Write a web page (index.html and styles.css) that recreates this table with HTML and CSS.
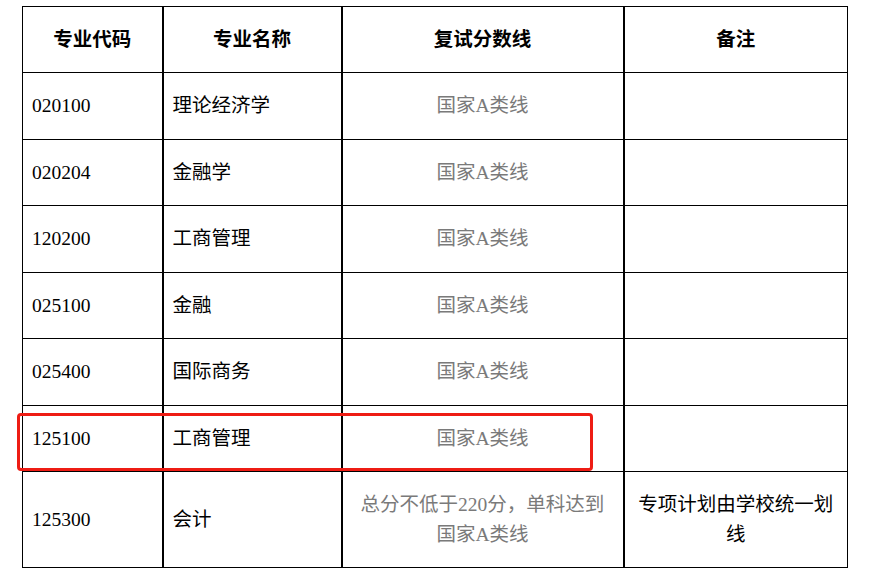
FILE: index.html
```html
<!DOCTYPE html>
<html lang="zh-CN">
<head>
<meta charset="utf-8">
<link rel="stylesheet" href="styles.css">
</head>
<body>
<div class="wrap">
<table class="score">
  <colgroup>
    <col class="c1"><col class="c2"><col class="c3"><col class="c4">
  </colgroup>
  <thead>
    <tr class="head">
      <th>专业代码</th><th>专业名称</th><th>复试分数线</th><th>备注</th>
    </tr>
  </thead>
  <tbody>
    <tr class="r67"><td class="code">020100</td><td class="name">理论经济学</td><td class="line">国家A类线</td><td></td></tr>
    <tr class="r66"><td class="code">020204</td><td class="name">金融学</td><td class="line">国家A类线</td><td></td></tr>
    <tr class="r67"><td class="code">120200</td><td class="name">工商管理</td><td class="line">国家A类线</td><td></td></tr>
    <tr class="r66"><td class="code">025100</td><td class="name">金融</td><td class="line">国家A类线</td><td></td></tr>
    <tr class="r67"><td class="code">025400</td><td class="name">国际商务</td><td class="line">国家A类线</td><td></td></tr>
    <tr class="r66"><td class="code">125100</td><td class="name">工商管理</td><td class="line">国家A类线</td><td></td></tr>
    <tr class="rlast"><td class="code">125300</td><td class="name">会计</td><td class="line">总分不低于220分，单科达到<br>国家A类线</td><td class="note">专项计划由学校统一划<br>线</td></tr>
  </tbody>
</table>
<div class="highlight"></div>
</div>
</body>
</html>
```

FILE: styles.css
```css
html, body {
  margin: 0;
  padding: 0;
  background: #ffffff;
}
.wrap {
  position: relative;
  width: 869px;
  height: 578px;
  padding: 6px 0 0 22px;
  box-sizing: border-box;
}
.score {
  border-collapse: collapse;
  table-layout: fixed;
  width: 825px;
  font-family: "Liberation Serif", "Noto Sans CJK SC", serif;
  font-size: 19.5px;
  color: #000;
}
.c1 { width: 140px; }
.c2 { width: 179px; }
.c3 { width: 282px; }
.c4 { width: 224px; }
.score th, .score td {
  border: 1px solid #000;
  padding: 0 9px;
  vertical-align: middle;
  line-height: 30px;
}
.score th + th, .score td + td {
  border-left: 2px solid #000;
}
.score th {
  font-weight: bold;
  text-align: center;
}
.head { height: 66px; }
.r67 { height: 67px; }
.r66 { height: 66px; }
.rlast { height: 96px; }
.code, .name { text-align: left; }
.code { padding-left: 9px; }
.name { padding-left: 10px; }
.line {
  text-align: center;
  color: #7a7a7a;
}
.note { text-align: center; }
.highlight {
  position: absolute;
  left: 17px;
  top: 413px;
  width: 576px;
  height: 58px;
  box-sizing: border-box;
  border: 3px solid #ee1c14;
  border-radius: 4px;
}
```
